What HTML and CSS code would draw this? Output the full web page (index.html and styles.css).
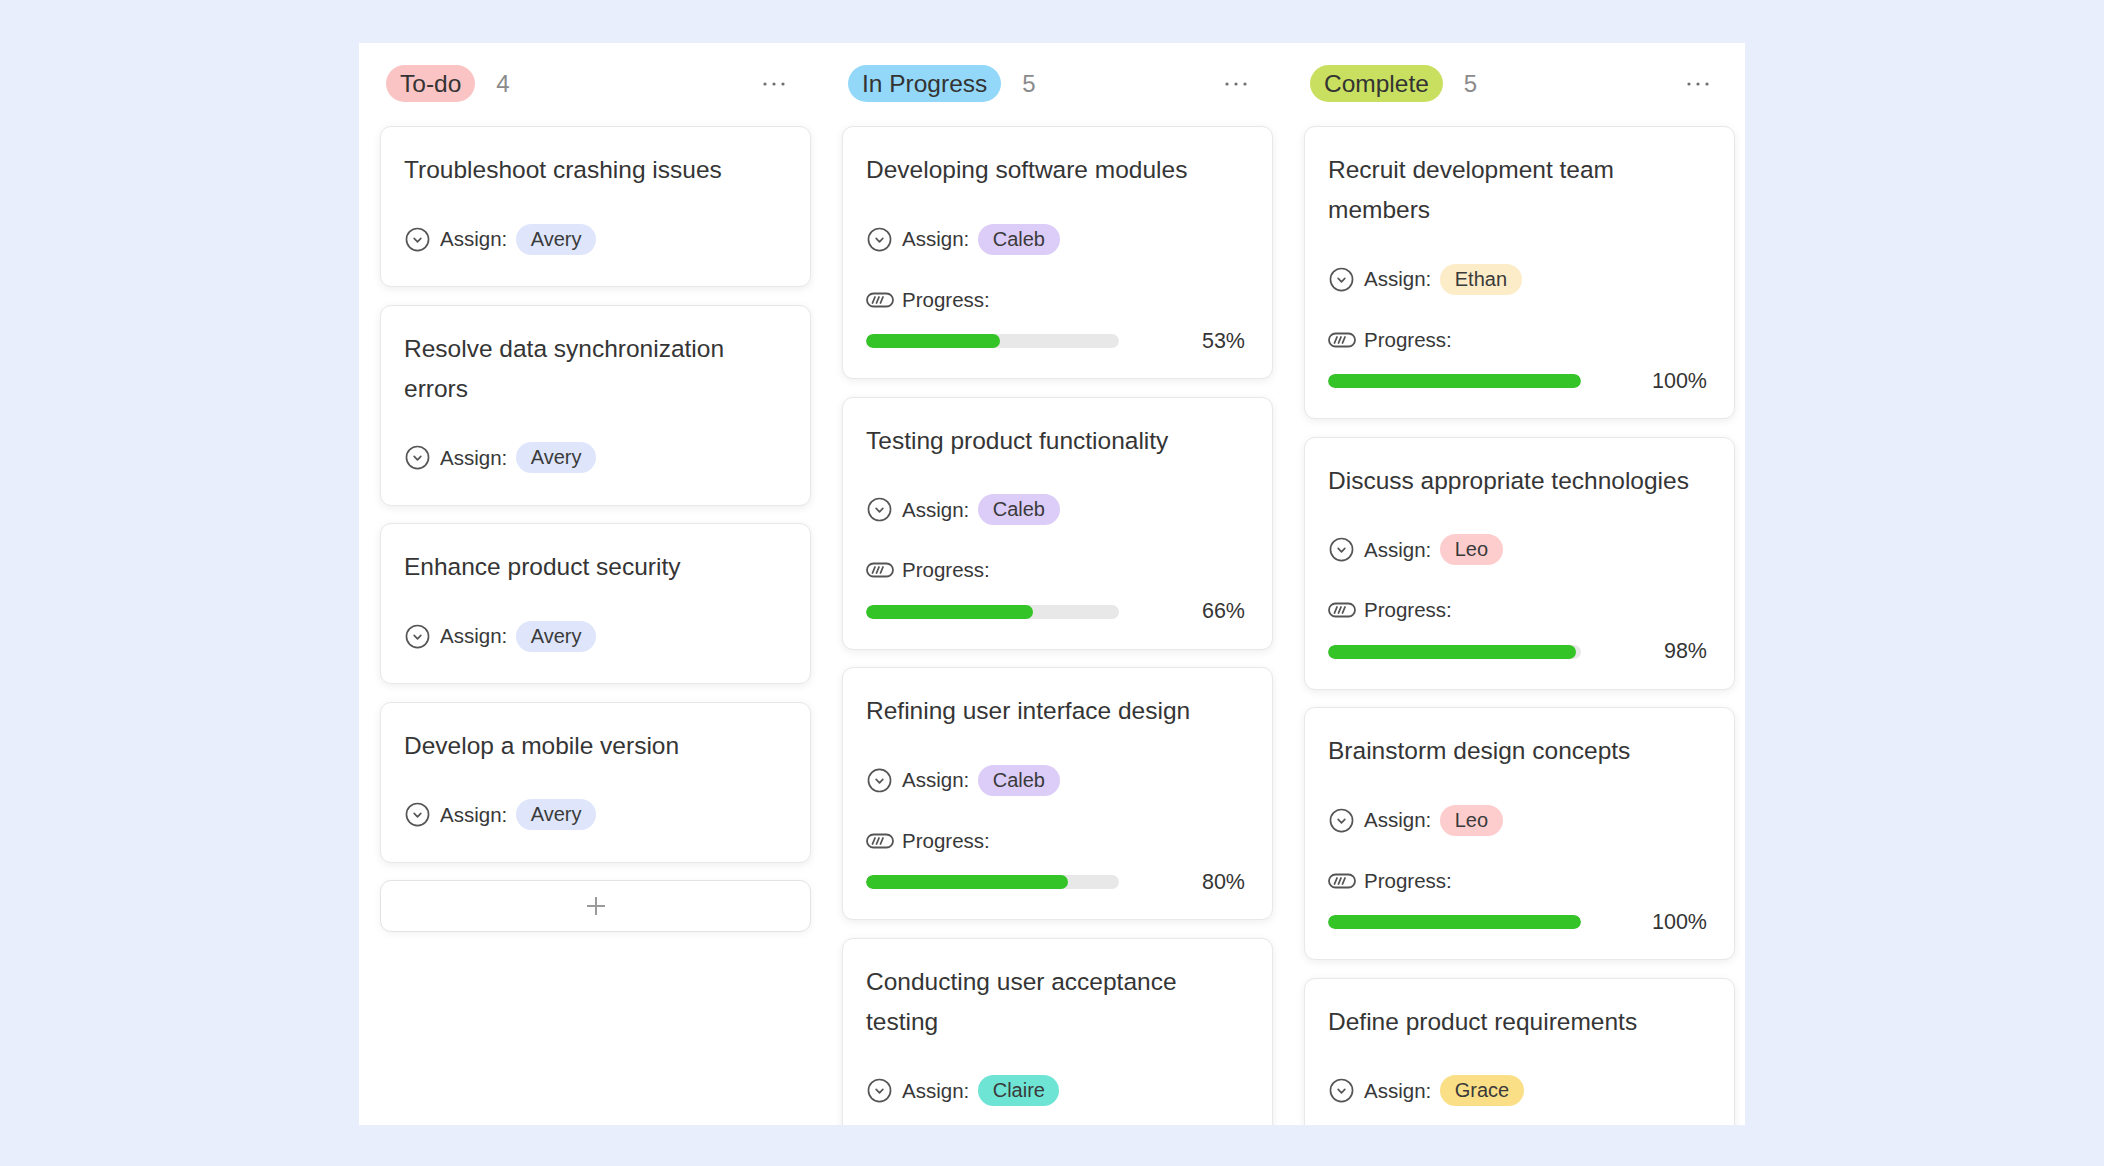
FILE: index.html
```html
<!DOCTYPE html>
<html lang="en">
<head>
<meta charset="utf-8">
<title>Board</title>
<link rel="stylesheet" href="styles.css">
</head>
<body>
<div class="board">

  <section class="column">
    <header class="col-head">
      <span class="status status-todo">To-do</span>
      <span class="count">4</span>
      <svg class="more" viewBox="0 0 22 4" width="22" height="4"><circle cx="2" cy="2" r="1.6"/><circle cx="11" cy="2" r="1.6"/><circle cx="20" cy="2" r="1.6"/></svg>
    </header>
    <div class="cards">
      <article class="card">
        <div class="title">Troubleshoot crashing issues</div>
        <div class="assign">
          <svg class="ic-assign" viewBox="0 0 24 24" width="25" height="25"><circle cx="12" cy="12" r="10.6"/><path d="M8.8 11 L12 14.2 L15.2 11"/></svg>
          <span class="label">Assign:</span>
          <span class="who who-avery">Avery</span>
        </div>
      </article>
      <article class="card">
        <div class="title">Resolve data synchronization errors</div>
        <div class="assign">
          <svg class="ic-assign" viewBox="0 0 24 24" width="25" height="25"><circle cx="12" cy="12" r="10.6"/><path d="M8.8 11 L12 14.2 L15.2 11"/></svg>
          <span class="label">Assign:</span>
          <span class="who who-avery">Avery</span>
        </div>
      </article>
      <article class="card">
        <div class="title">Enhance product security</div>
        <div class="assign">
          <svg class="ic-assign" viewBox="0 0 24 24" width="25" height="25"><circle cx="12" cy="12" r="10.6"/><path d="M8.8 11 L12 14.2 L15.2 11"/></svg>
          <span class="label">Assign:</span>
          <span class="who who-avery">Avery</span>
        </div>
      </article>
      <article class="card">
        <div class="title">Develop a mobile version</div>
        <div class="assign">
          <svg class="ic-assign" viewBox="0 0 24 24" width="25" height="25"><circle cx="12" cy="12" r="10.6"/><path d="M8.8 11 L12 14.2 L15.2 11"/></svg>
          <span class="label">Assign:</span>
          <span class="who who-avery">Avery</span>
        </div>
      </article>
      <button class="add" type="button" aria-label="Add task">
        <svg viewBox="0 0 20 20" width="20" height="20"><path d="M10 1 V19 M1 10 H19"/></svg>
      </button>
    </div>
  </section>

  <section class="column">
    <header class="col-head">
      <span class="status status-progress">In Progress</span>
      <span class="count">5</span>
      <svg class="more" viewBox="0 0 22 4" width="22" height="4"><circle cx="2" cy="2" r="1.6"/><circle cx="11" cy="2" r="1.6"/><circle cx="20" cy="2" r="1.6"/></svg>
    </header>
    <div class="cards">
      <article class="card">
        <div class="title">Developing software modules</div>
        <div class="assign">
          <svg class="ic-assign" viewBox="0 0 24 24" width="25" height="25"><circle cx="12" cy="12" r="10.6"/><path d="M8.8 11 L12 14.2 L15.2 11"/></svg>
          <span class="label">Assign:</span>
          <span class="who who-caleb">Caleb</span>
        </div>
        <div class="prog-label">
          <svg class="ic-prog" viewBox="0 0 28 16" width="28" height="16"><rect x="1" y="1.5" width="26" height="13" rx="6.5"/><path d="M6.5 11 L9 5 M10.5 11 L13 5 M14.5 11 L17 5"/></svg>
          <span class="label">Progress:</span>
        </div>
        <div class="prog-row">
          <div class="track"><div class="fill" style="width:53%"></div></div>
          <span class="pct">53%</span>
        </div>
      </article>
      <article class="card">
        <div class="title">Testing product functionality</div>
        <div class="assign">
          <svg class="ic-assign" viewBox="0 0 24 24" width="25" height="25"><circle cx="12" cy="12" r="10.6"/><path d="M8.8 11 L12 14.2 L15.2 11"/></svg>
          <span class="label">Assign:</span>
          <span class="who who-caleb">Caleb</span>
        </div>
        <div class="prog-label">
          <svg class="ic-prog" viewBox="0 0 28 16" width="28" height="16"><rect x="1" y="1.5" width="26" height="13" rx="6.5"/><path d="M6.5 11 L9 5 M10.5 11 L13 5 M14.5 11 L17 5"/></svg>
          <span class="label">Progress:</span>
        </div>
        <div class="prog-row">
          <div class="track"><div class="fill" style="width:66%"></div></div>
          <span class="pct">66%</span>
        </div>
      </article>
      <article class="card">
        <div class="title">Refining user interface design</div>
        <div class="assign">
          <svg class="ic-assign" viewBox="0 0 24 24" width="25" height="25"><circle cx="12" cy="12" r="10.6"/><path d="M8.8 11 L12 14.2 L15.2 11"/></svg>
          <span class="label">Assign:</span>
          <span class="who who-caleb">Caleb</span>
        </div>
        <div class="prog-label">
          <svg class="ic-prog" viewBox="0 0 28 16" width="28" height="16"><rect x="1" y="1.5" width="26" height="13" rx="6.5"/><path d="M6.5 11 L9 5 M10.5 11 L13 5 M14.5 11 L17 5"/></svg>
          <span class="label">Progress:</span>
        </div>
        <div class="prog-row">
          <div class="track"><div class="fill" style="width:80%"></div></div>
          <span class="pct">80%</span>
        </div>
      </article>
      <article class="card">
        <div class="title">Conducting user acceptance testing</div>
        <div class="assign">
          <svg class="ic-assign" viewBox="0 0 24 24" width="25" height="25"><circle cx="12" cy="12" r="10.6"/><path d="M8.8 11 L12 14.2 L15.2 11"/></svg>
          <span class="label">Assign:</span>
          <span class="who who-claire">Claire</span>
        </div>
      </article>
    </div>
  </section>

  <section class="column">
    <header class="col-head">
      <span class="status status-complete">Complete</span>
      <span class="count">5</span>
      <svg class="more" viewBox="0 0 22 4" width="22" height="4"><circle cx="2" cy="2" r="1.6"/><circle cx="11" cy="2" r="1.6"/><circle cx="20" cy="2" r="1.6"/></svg>
    </header>
    <div class="cards">
      <article class="card">
        <div class="title">Recruit development team members</div>
        <div class="assign">
          <svg class="ic-assign" viewBox="0 0 24 24" width="25" height="25"><circle cx="12" cy="12" r="10.6"/><path d="M8.8 11 L12 14.2 L15.2 11"/></svg>
          <span class="label">Assign:</span>
          <span class="who who-ethan">Ethan</span>
        </div>
        <div class="prog-label">
          <svg class="ic-prog" viewBox="0 0 28 16" width="28" height="16"><rect x="1" y="1.5" width="26" height="13" rx="6.5"/><path d="M6.5 11 L9 5 M10.5 11 L13 5 M14.5 11 L17 5"/></svg>
          <span class="label">Progress:</span>
        </div>
        <div class="prog-row">
          <div class="track"><div class="fill" style="width:100%"></div></div>
          <span class="pct">100%</span>
        </div>
      </article>
      <article class="card">
        <div class="title">Discuss appropriate technologies</div>
        <div class="assign">
          <svg class="ic-assign" viewBox="0 0 24 24" width="25" height="25"><circle cx="12" cy="12" r="10.6"/><path d="M8.8 11 L12 14.2 L15.2 11"/></svg>
          <span class="label">Assign:</span>
          <span class="who who-leo">Leo</span>
        </div>
        <div class="prog-label">
          <svg class="ic-prog" viewBox="0 0 28 16" width="28" height="16"><rect x="1" y="1.5" width="26" height="13" rx="6.5"/><path d="M6.5 11 L9 5 M10.5 11 L13 5 M14.5 11 L17 5"/></svg>
          <span class="label">Progress:</span>
        </div>
        <div class="prog-row">
          <div class="track"><div class="fill" style="width:98%"></div></div>
          <span class="pct">98%</span>
        </div>
      </article>
      <article class="card">
        <div class="title">Brainstorm design concepts</div>
        <div class="assign">
          <svg class="ic-assign" viewBox="0 0 24 24" width="25" height="25"><circle cx="12" cy="12" r="10.6"/><path d="M8.8 11 L12 14.2 L15.2 11"/></svg>
          <span class="label">Assign:</span>
          <span class="who who-leo">Leo</span>
        </div>
        <div class="prog-label">
          <svg class="ic-prog" viewBox="0 0 28 16" width="28" height="16"><rect x="1" y="1.5" width="26" height="13" rx="6.5"/><path d="M6.5 11 L9 5 M10.5 11 L13 5 M14.5 11 L17 5"/></svg>
          <span class="label">Progress:</span>
        </div>
        <div class="prog-row">
          <div class="track"><div class="fill" style="width:100%"></div></div>
          <span class="pct">100%</span>
        </div>
      </article>
      <article class="card">
        <div class="title">Define product requirements</div>
        <div class="assign">
          <svg class="ic-assign" viewBox="0 0 24 24" width="25" height="25"><circle cx="12" cy="12" r="10.6"/><path d="M8.8 11 L12 14.2 L15.2 11"/></svg>
          <span class="label">Assign:</span>
          <span class="who who-grace">Grace</span>
        </div>
      </article>
    </div>
  </section>

</div>
</body>
</html>
```

FILE: styles.css
```css
* { box-sizing: border-box; }

html, body {
  margin: 0;
  padding: 0;
}

body {
  background: #e8eefc;
  font-family: "Liberation Sans", Arial, sans-serif;
  color: #333;
  height: 1166px;
  overflow: hidden;
}

.board {
  width: 1386px;
  height: 1082px;
  margin: 43px auto 0;
  background: #ffffff;
  overflow: hidden;
  display: grid;
  grid-template-columns: repeat(3, 462px);
}

.column {
  padding: 22px 10px 0 21px;
  min-width: 0;
}

.col-head {
  height: 37px;
  margin-bottom: 24px;
  padding: 0 26px 0 6px;
  display: flex;
  align-items: center;
}

.status {
  height: 37px;
  line-height: 37px;
  padding: 0 14px;
  border-radius: 19px;
  font-size: 24.5px;
  color: #333;
}

.status-todo { background: #fbc4c4; }
.status-progress { background: #93d8f8; }
.status-complete { background: #c9df60; }

.count {
  margin-left: 21px;
  font-size: 24px;
  color: #8b8b8b;
}

.more {
  margin-left: auto;
  fill: #6f6f6f;
}

.cards {
  display: flex;
  flex-direction: column;
  gap: 17.5px;
}

.card {
  flex: none;
  background: #fff;
  border: 1px solid #e8e8e8;
  border-radius: 11px;
  box-shadow: 0 2px 9px rgba(0, 0, 0, 0.07);
  padding: 23px 27px 27px 23px;
}

.title {
  font-size: 24.5px;
  line-height: 40px;
  color: #353535;
}

.assign {
  margin-top: 29px;
  height: 40px;
  display: flex;
  align-items: center;
}

.ic-assign {
  flex: none;
  fill: none;
  stroke: #555;
  stroke-width: 1.6;
  stroke-linecap: round;
  stroke-linejoin: round;
  margin-left: 1px;
  margin-right: 10px;
}

.label {
  font-size: 20.5px;
  color: #383838;
}

.who {
  margin-left: 9px;
  height: 31px;
  line-height: 31px;
  padding: 0 14.5px;
  border-radius: 16px;
  font-size: 20px;
  color: #3a3a3a;
}

.who-avery { background: #dfe6fb; }
.who-caleb { background: #dccdf8; }
.who-ethan { background: #fcecc8; }
.who-leo { background: #fdcdcd; }
.who-claire { background: #6ee4d4; }
.who-grace { background: #fbdf87; }

.prog-label {
  margin-top: 20.5px;
  height: 40px;
  display: flex;
  align-items: center;
}

.ic-prog {
  flex: none;
  fill: none;
  stroke: #555;
  stroke-width: 1.8;
  stroke-linecap: round;
  margin-right: 8px;
}

.prog-row {
  margin-top: 11.5px;
  height: 20px;
  display: flex;
  align-items: center;
  justify-content: space-between;
}

.track {
  width: 253px;
  height: 14px;
  border-radius: 7px;
  background: #e8e8e8;
  overflow: hidden;
}

.fill {
  height: 100%;
  border-radius: 7px;
  background: #34c427;
}

.pct {
  font-size: 21.5px;
  color: #353535;
}

.add {
  display: flex;
  align-items: center;
  justify-content: center;
  height: 52px;
  padding: 0;
  background: #fff;
  border: 1px solid #e3e3e3;
  border-radius: 11px;
  box-shadow: 0 2px 9px rgba(0, 0, 0, 0.05);
  cursor: pointer;
}

.add svg {
  fill: none;
  stroke: #9a9a9a;
  stroke-width: 2;
}
```
